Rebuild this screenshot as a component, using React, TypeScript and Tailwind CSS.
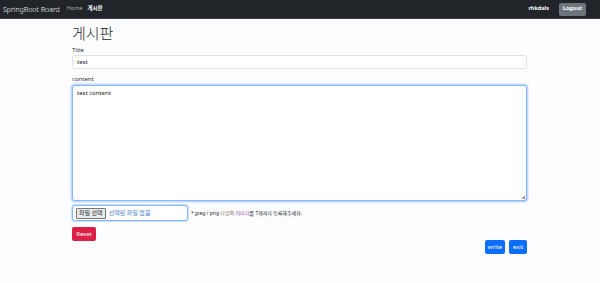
import React from "react";

export default function App() {
  const font = { fontFamily: '"Noto Sans", "Noto Sans CJK KR", sans-serif' };
  return (
    <div className="w-[600px] h-[283px] bg-[#fdfdff] overflow-hidden" style={font}>
      <nav className="h-[19px] bg-[#212529] border-b border-[#3a3d41] flex items-center px-[3px]">
        <span className="text-[7px] font-light text-white leading-none">SpringBoot Board</span>
        <span className="ml-[7px] text-[5.5px] text-[#a8aaad] leading-none">Home</span>
        <span className="ml-[5px] text-[5.5px] text-white font-bold leading-none">게시판</span>
        <div className="flex-1" />
        <span className="text-[5.5px] text-white font-bold leading-none">rhkdals</span>
        <button className="ml-[10px] mr-[11px] h-[13px] w-[27px] bg-[#6c757d] rounded-[2px] text-white text-[5.5px] font-bold leading-none flex items-center justify-center">
          Logout
        </button>
      </nav>
      <div className="w-[455px] ml-[72px] flex flex-col">
        <div className="mt-[6px] text-[15px] font-light text-[#212529] leading-[17px]">게시판</div>
        <label className="mt-[4px] text-[6px] text-[#333] leading-[8px]">Title</label>
        <div className="mt-[1px] h-[14px] border border-[#dee2e6] rounded-[3px] bg-white flex items-center px-[4px] text-[6px] text-[#212529] leading-none">
          test
        </div>
        <label className="mt-[6px] text-[6px] text-[#333] leading-[8px]">content</label>
        <div className="mt-[2px] h-[116px] border border-[#86b7fe] rounded-[3px] bg-white shadow-[0_0_0_1.5px_rgba(13,110,253,0.25)] px-[4px] py-[3px] text-[6px] text-[#212529] leading-[8px] relative">
          test content
          <svg className="absolute right-[1px] bottom-[1px]" width="4" height="4" viewBox="0 0 4 4">
            <path d="M4 0 L4 4 L0 4 Z" fill="#9aa0a6" />
          </svg>
        </div>
        <div className="mt-[4px] flex items-center">
          <div className="w-[116px] h-[16px] border border-[#86b7fe] rounded-[3px] bg-white shadow-[0_0_0_1px_rgba(13,110,253,0.2)] flex items-center pl-[3px]">
            <span className="h-[11px] px-[2px] bg-[#e9ecef] border border-[#767676] rounded-[1px] text-[6px] text-[#212529] leading-[9px]">파일 선택</span>
            <span className="ml-[3px] text-[6px] text-[#4a7fd0] leading-none">선택된 파일 없음</span>
          </div>
          <span className="ml-[3px] text-[5px] text-[#212529] leading-none">
            * jpeg / png <span className="text-[#8a6d3b]">타입의</span> <span className="text-[#8a4fb0]">이미지</span>를 7개까지 등록해주세요.
          </span>
        </div>
        <div className="mt-[6px] flex">
          <button className="h-[14px] w-[24px] bg-[#dc1f45] rounded-[2px] text-white text-[6px] leading-none">Reset</button>
        </div>
        <div className="-mt-[1px] flex justify-end gap-[4px]">
          <button className="h-[14px] w-[20px] bg-[#0d6efd] rounded-[2px] text-white text-[6px] leading-none">write</button>
          <button className="h-[14px] w-[18px] bg-[#0d6efd] rounded-[2px] text-white text-[6px] leading-none">exit</button>
        </div>
      </div>
    </div>
  );
}
